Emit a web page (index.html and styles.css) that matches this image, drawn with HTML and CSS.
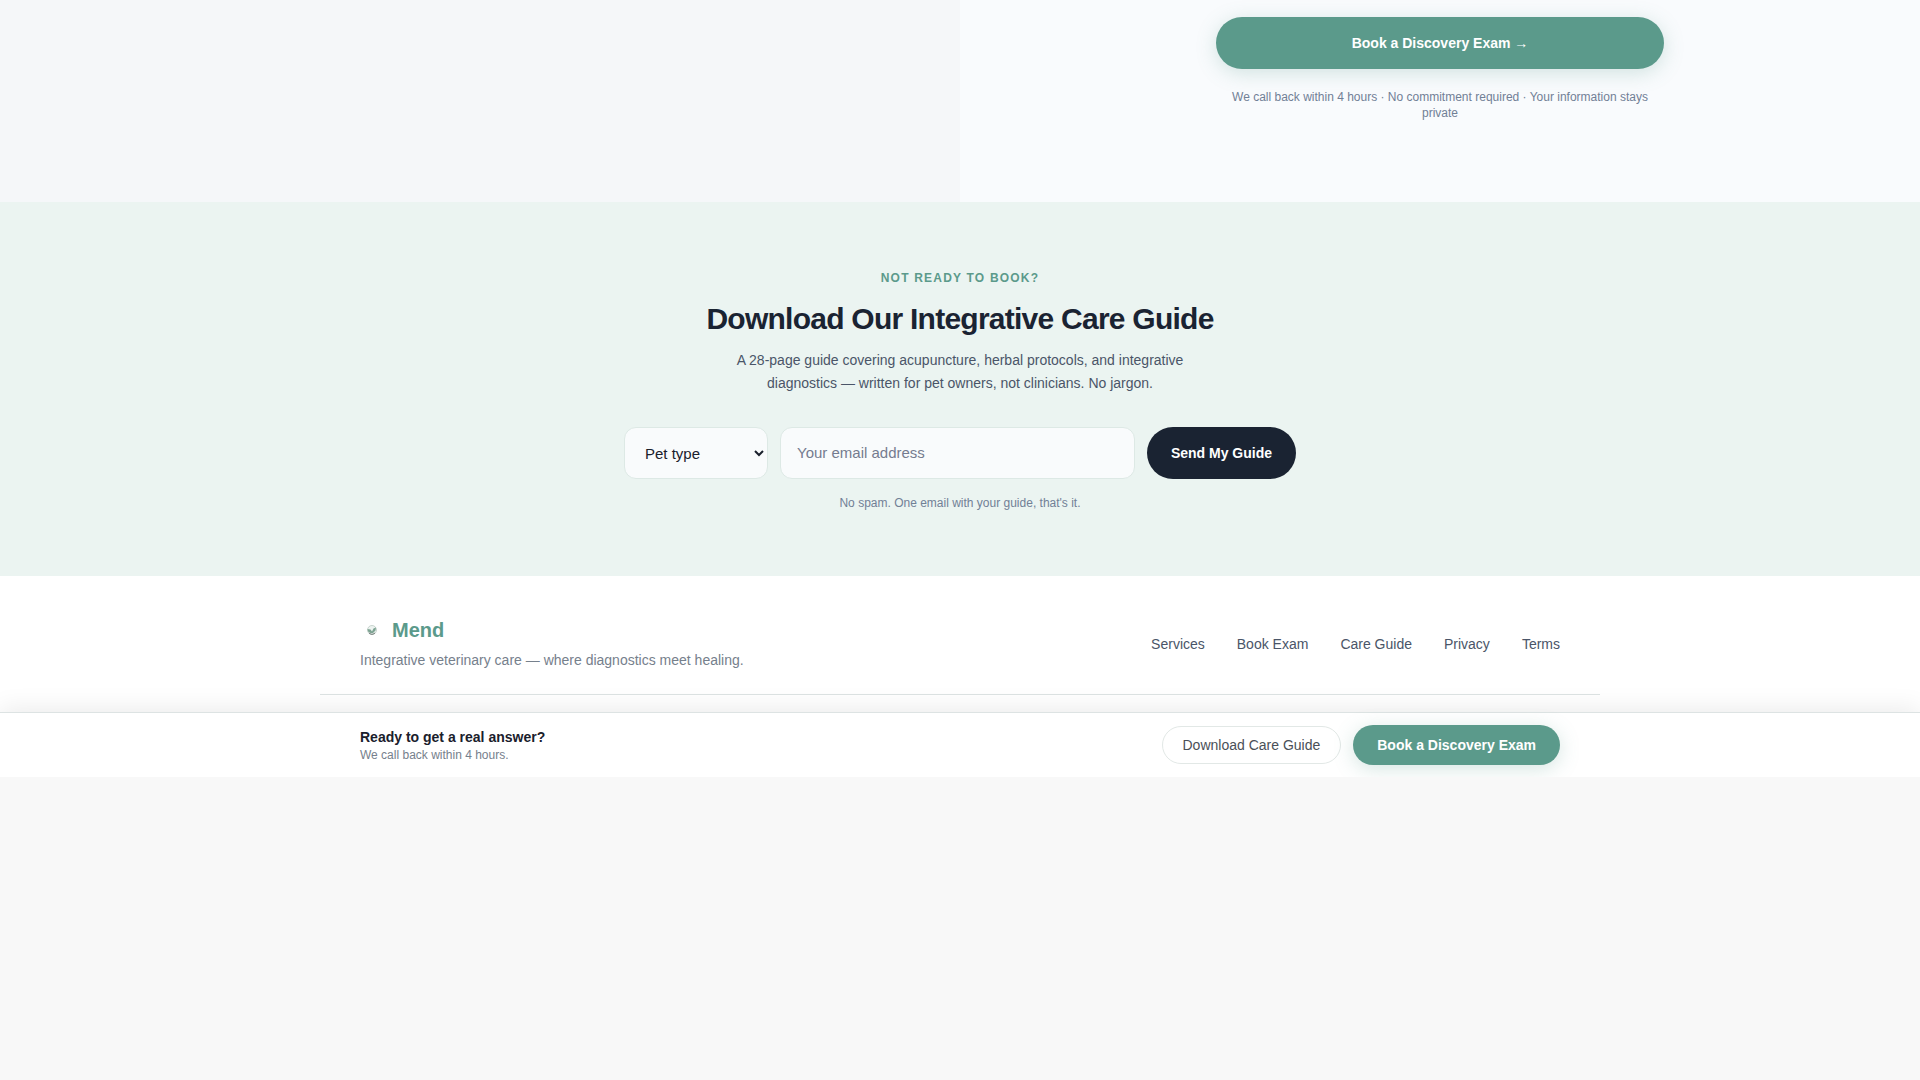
FILE: index.html
```html
<!DOCTYPE html>
<html lang="en">
<head>
<meta charset="utf-8">
<meta name="viewport" content="width=device-width, initial-scale=1">
<title>Mend</title>
<link rel="stylesheet" href="styles.css">
</head>
<body>
<section class="booking">
  <div class="booking-aside"></div>
  <form class="booking-form">
    <button class="btn btn-primary btn-large" type="button">Book a Discovery Exam →</button>
    <p class="small-note">We call back within 4 hours · No commitment required · Your information stays private</p>
  </form>
</section>

<section class="guide">
  <p class="eyebrow">Not ready to book?</p>
  <h2 class="guide-title">Download Our Integrative Care Guide</h2>
  <p class="guide-text">A 28-page guide covering acupuncture, herbal protocols, and integrative diagnostics — written for pet owners, not clinicians. No jargon.</p>
  <form class="guide-form">
    <select class="field field-select" aria-label="Pet type">
      <option>Pet type</option>
      <option>Dog</option>
      <option>Cat</option>
    </select>
    <input class="field field-email" type="email" placeholder="Your email address" aria-label="Your email address">
    <button class="btn btn-dark btn-large" type="button">Send My Guide</button>
  </form>
  <p class="small-note">No spam. One email with your guide, that's it.</p>
</section>

<footer class="footer">
  <div class="footer-inner">
    <div class="brand">
      <a class="logo" href="#">
        <svg class="logo-mark" viewBox="0 0 24 24" aria-hidden="true">
          <circle cx="12" cy="12" r="4.500" fill="#edf3f0" stroke="#bccac4" stroke-width=".8"/>
          <path d="M7.500 11l3 .5 1.500 2 1.500-3 2.500-1-.5 3-2.500 2.500h-2.500l-2.500-1.500z" fill="#7da392"/>
          <path d="M9 15l2 1.200h2l2-1.200" fill="none" stroke="#66716c" stroke-width=".9"/>
        </svg>
        <span>Mend</span>
      </a>
      <p class="tagline">Integrative veterinary care — where diagnostics meet healing.</p>
    </div>
    <nav class="footer-nav">
      <a href="#">Services</a>
      <a href="#">Book Exam</a>
      <a href="#">Care Guide</a>
      <a href="#">Privacy</a>
      <a href="#">Terms</a>
    </nav>
  </div>
</footer>

<aside class="cta-bar">
  <div class="cta-inner">
    <div>
      <p class="cta-title">Ready to get a real answer?</p>
      <p class="cta-text">We call back within 4 hours.</p>
    </div>
    <div class="cta-actions">
      <button class="btn btn-outline" type="button">Download Care Guide</button>
      <button class="btn btn-primary" type="button">Book a Discovery Exam</button>
    </div>
  </div>
</aside>
</body>
</html>
```
FILE: styles.css
```css
*, *::before, *::after { box-sizing: border-box; }

body {
  margin: 0;
  background: #f8f8f8;
  color: #1a202c;
  font-family: "Liberation Sans", Arial, sans-serif;
  font-size: 14px;
  line-height: 20px;
}

p, h2 { margin: 0; }
a { color: inherit; text-decoration: none; }

.btn {
  height: 40px;
  padding: 0 24px;
  border: 0;
  border-radius: 999px;
  font: bold 14px/20px "Liberation Sans", Arial, sans-serif;
  white-space: nowrap;
  cursor: pointer;
}
.btn-large { height: 52px; }
.btn-primary {
  background: #5b9a8b;
  color: #fff;
  box-shadow: 0 4px 20px rgba(91, 154, 139, .25);
}
.btn-dark { background: #1a2332; color: #fff; }
.btn-outline {
  height: 38px;
  padding: 0 20px;
  border: 1px solid #e2e8e6;
  background: #fff;
  color: #4a5058;
  font-weight: normal;
}

.small-note {
  color: #718096;
  font-size: 12px;
  line-height: 16px;
  text-align: center;
}

.booking {
  display: grid;
  grid-template-columns: 1fr 1fr;
  background: #f9fbfd;
}
.booking-aside { background: #f5f7f9; }
.booking-form {
  display: flex;
  flex-direction: column;
  gap: 20px;
  width: 100%;
  max-width: 448px;
  margin: 0 auto;
  padding: 17px 0 81px;
}

.guide {
  display: flex;
  flex-direction: column;
  align-items: center;
  padding: 68px 24px 65px;
  background: #ebf4f1;
}
.eyebrow {
  margin-bottom: 13px;
  color: #5b9a8b;
  font-size: 12px;
  line-height: 16px;
  font-weight: bold;
  letter-spacing: 0.1em;
  text-transform: uppercase;
}
.guide-title {
  margin-bottom: 10px;
  color: #1a2332;
  font-size: 30px;
  line-height: 40px;
  letter-spacing: -0.025em;
  text-align: center;
}
.guide-text {
  max-width: 480px;
  margin-bottom: 32px;
  color: #4a5568;
  line-height: 23px;
  text-align: center;
}
.guide-form {
  display: flex;
  align-items: stretch;
  gap: 12px;
  width: 100%;
  max-width: 672px;
  margin-bottom: 16px;
}
.field {
  border: 1px solid #dde9e5;
  border-radius: 12px;
  background: #f9fbfc;
  color: #1a202c;
  font: 15px/20px "Liberation Sans", Arial, sans-serif;
}
.field-select { width: 144px; padding: 0 0 0 16px; }
.field-email { flex: 1; min-width: 0; padding: 0 16px; }
.field-email::placeholder { color: #757b8f; }

.footer {
  padding-bottom: 17px;
  background: #fff;
}
.footer-inner {
  display: flex;
  align-items: center;
  justify-content: space-between;
  max-width: 1280px;
  margin: 0 auto;
  padding: 42px 40px 24px;
  border-bottom: 1px solid #dde3e3;
}
.logo {
  display: flex;
  align-items: center;
  gap: 8px;
  margin-bottom: 8px;
  color: #5b9a8b;
  font-size: 20px;
  line-height: 24px;
  font-weight: bold;
}
.logo-mark { width: 24px; height: 24px; }
.tagline { color: #76808c; }
.footer-nav { display: flex; gap: 32px; color: #4a5568; }

.cta-bar {
  border-top: 1px solid #dde3e3;
  background: #fff;
  box-shadow: 0 -4px 24px rgba(0, 0, 0, .08);
  clip-path: inset(-40px 0 0 0);
}
.cta-inner {
  display: flex;
  align-items: center;
  justify-content: space-between;
  max-width: 1280px;
  margin: 0 auto;
  padding: 12px 40px;
}
.cta-title { font-weight: bold; }
.cta-text { color: #76808c; font-size: 12px; line-height: 16px; }
.cta-actions { display: flex; align-items: center; gap: 12px; }
```
